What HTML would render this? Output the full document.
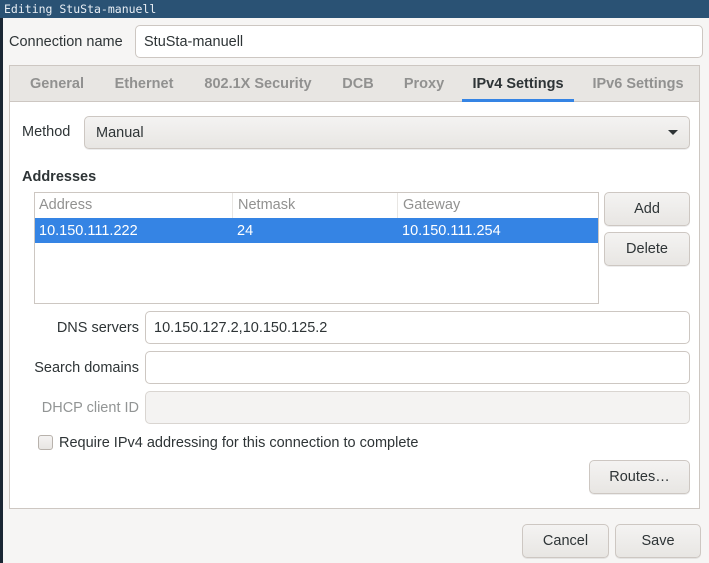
<!DOCTYPE html>
<html><head><style>
*{box-sizing:border-box;margin:0;padding:0}
body{width:709px;height:563px;background:#f6f5f4;font-family:"Liberation Sans","DejaVu Sans",sans-serif;font-size:14.5px;line-height:17px;color:#2e3436;position:relative;overflow:hidden}
.a{position:absolute}
.title{left:0;top:0;width:709px;height:18px;background:#2a5274;color:#e8eef4;font-family:"DejaVu Sans Mono","Liberation Mono",monospace;font-size:11.5px;line-height:18px;padding-left:4px}
.lb{left:0;top:18px;width:3px;height:545px;background:#1a2633}
.entry{background:#fff;border:1px solid #cdc7c2;border-radius:5px;line-height:32px;padding-left:8px}
.btn{background:linear-gradient(#f4f3f2,#e8e6e3);border:1px solid #cdc7c2;border-radius:5px;text-align:center;line-height:33px;box-shadow:0 1px 0 rgba(0,0,0,.07)}
.tab{top:66px;height:37px;line-height:37px;font-weight:bold;color:#919190;text-align:center}
.lbl{text-align:right}
</style></head><body>
<div class="a title">Editing StuSta-manuell</div>
<div class="a lb"></div>
<div class="a" style="left:9px;top:34px">Connection name</div>
<div class="a entry" style="left:135px;top:25px;width:568px;height:33px">StuSta-manuell</div>

<div class="a" style="left:9px;top:65px;width:691px;height:444px;border:1px solid #cdc7c2;background:#fff"></div>
<div class="a" style="left:10px;top:66px;width:689px;height:36px;background:#e8e6e3;border-bottom:1px solid #cdc7c2"></div>
<div class="a tab" style="left:20px;width:74px">General</div>
<div class="a tab" style="left:104px;width:80px">Ethernet</div>
<div class="a tab" style="left:196px;width:124px">802.1X Security</div>
<div class="a tab" style="left:335px;width:46px">DCB</div>
<div class="a tab" style="left:396px;width:56px">Proxy</div>
<div class="a tab" style="left:462px;width:112px;color:#2e3436">IPv4 Settings</div>
<div class="a" style="left:462px;top:99px;width:112px;height:3px;background:#3584e4"></div>
<div class="a tab" style="left:584px;width:108px">IPv6 Settings</div>

<div class="a" style="left:22px;top:124px">Method</div>
<div class="a btn" style="left:84px;top:116px;width:606px;height:33px;text-align:left;padding-left:11px">Manual</div>
<div class="a" style="left:668px;top:130px;width:0;height:0;border-left:5px solid transparent;border-right:5px solid transparent;border-top:5px solid #2e3436"></div>

<div class="a" style="left:22px;top:169px;font-weight:bold">Addresses</div>
<div class="a" style="left:34px;top:192px;width:565px;height:112px;border:1px solid #cdc7c2;background:#fff"></div>
<div class="a" style="left:35px;top:193px;width:563px;height:25px;color:#919190;line-height:25px">
<span class="a" style="left:4px">Address</span><span class="a" style="left:203px">Netmask</span><span class="a" style="left:368px">Gateway</span>
<div class="a" style="left:197px;top:0;width:1px;height:25px;background:#e8e6e3"></div>
<div class="a" style="left:362px;top:0;width:1px;height:25px;background:#e8e6e3"></div>
</div>
<div class="a" style="left:35px;top:218px;width:563px;height:25px;background:#3584e4;color:#fff;line-height:27px">
<span class="a" style="left:4px">10.150.111.222</span><span class="a" style="left:202px">24</span><span class="a" style="left:367px">10.150.111.254</span>
</div>
<div class="a btn" style="left:604px;top:192px;width:86px;height:34px">Add</div>
<div class="a btn" style="left:604px;top:232px;width:86px;height:34px">Delete</div>

<div class="a lbl" style="left:20px;top:320px;width:119px">DNS servers</div>
<div class="a entry" style="left:145px;top:311px;width:545px;height:33px">10.150.127.2,10.150.125.2</div>
<div class="a lbl" style="left:20px;top:360px;width:119px">Search domains</div>
<div class="a entry" style="left:145px;top:351px;width:545px;height:33px"></div>
<div class="a lbl" style="left:20px;top:400px;width:119px;color:#929595">DHCP client ID</div>
<div class="a entry" style="left:145px;top:391px;width:545px;height:33px;background:#f4f3f2;border-color:#d9d5d1"></div>

<div class="a" style="left:38px;top:435px;width:15px;height:15px;border:1px solid #b8b2ac;border-radius:3px;background:linear-gradient(#f4f3f2,#e8e6e3)"></div>
<div class="a" style="left:59px;top:435px">Require IPv4 addressing for this connection to complete</div>
<div class="a btn" style="left:589px;top:460px;width:101px;height:34px">Routes…</div>

<div class="a btn" style="left:522px;top:524px;width:87px;height:34px">Cancel</div>
<div class="a btn" style="left:615px;top:524px;width:86px;height:34px">Save</div>
</body></html>
